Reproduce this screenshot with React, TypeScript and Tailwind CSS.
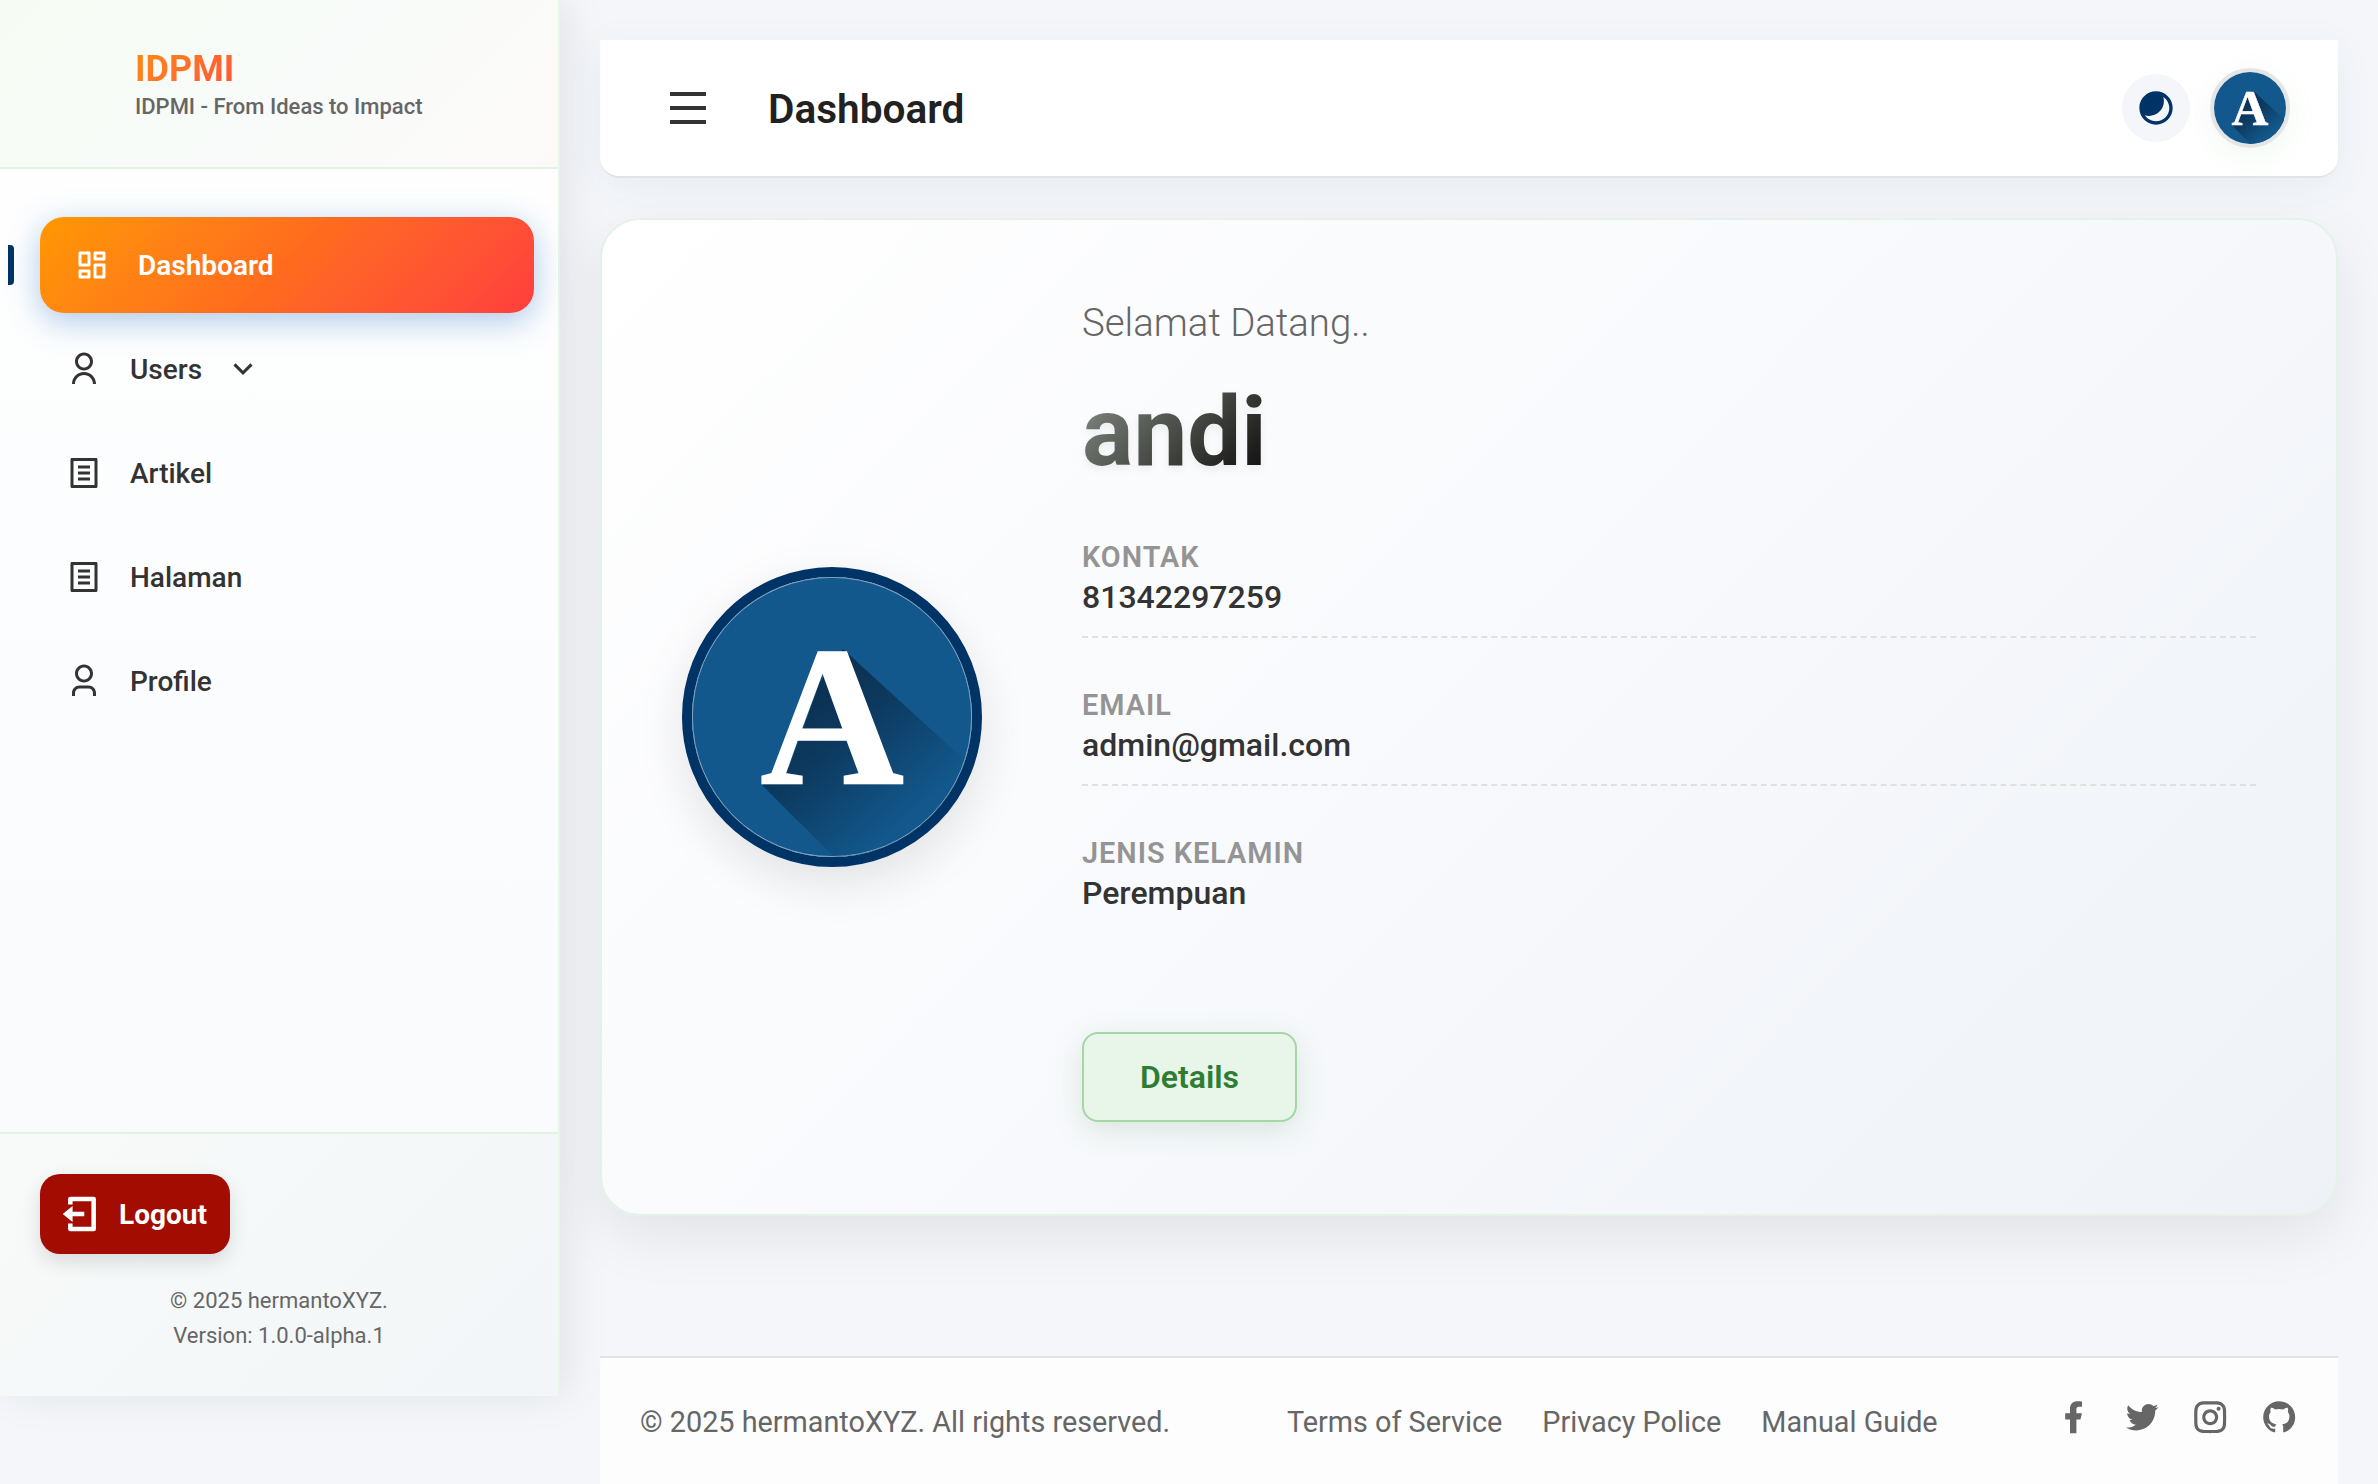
import { useId } from "react";
import type { ComponentType } from "react";
import {
  RiArrowDownSLine,
  RiContrast2Fill,
  RiDashboardLine,
  RiFacebookFill,
  RiFileListLine,
  RiGithubFill,
  RiInstagramLine,
  RiLogoutBoxLine,
  RiMenuLine,
  RiTwitterFill,
  RiUser3Line,
  RiUserLine,
} from "react-icons/ri";

type Icon = ComponentType<{ className?: string }>;

const navItems: { label: string; icon: Icon; expandable?: boolean }[] = [
  { label: "Users", icon: RiUserLine, expandable: true },
  { label: "Artikel", icon: RiFileListLine },
  { label: "Halaman", icon: RiFileListLine },
  { label: "Profile", icon: RiUser3Line },
];

const details = [
  { label: "KONTAK", value: "81342297259" },
  { label: "EMAIL", value: "admin@gmail.com" },
  { label: "JENIS KELAMIN", value: "Perempuan" },
];

const socials: Icon[] = [RiFacebookFill, RiTwitterFill, RiInstagramLine, RiGithubFill];

function AvatarArt({ rim }: { rim?: boolean }) {
  const id = useId();
  return (
    <svg viewBox="0 0 280 280" className="block h-full w-full rounded-full">
      <defs>
        <linearGradient id={id} gradientUnits="userSpaceOnUse" x1="110" y1="110" x2="222" y2="236">
          <stop offset="0" stopColor="#0b2f50" />
          <stop offset="0.4" stopColor="#0d3a60" />
          <stop offset="1" stopColor="#12588c" />
        </linearGradient>
      </defs>
      <rect width="280" height="280" fill="#12588c" />
      <path d="M151 72 L280 190 V280 H142 L70 208 L97 190 L128 105 Z" fill={`url(#${id})`} />
      <text
        x="140"
        y="207"
        textAnchor="middle"
        fill="#fff"
        stroke="#fff"
        strokeWidth="1.5"
        className="font-['Liberation_Serif',serif] text-[199px] font-bold"
      >
        A
      </text>
      {rim && <circle cx="140" cy="140" r="139.6" fill="none" stroke="#a9b9c6" strokeWidth="0.8" />}
    </svg>
  );
}

function Sidebar() {
  return (
    <aside className="relative z-10 flex h-[1396px] w-[560px] shrink-0 flex-col border-r-2 border-[#e8f5e9] bg-linear-to-b from-white to-[#f8fafc] shadow-[8px_0_40px_rgba(0,0,0,0.08)]">
      <div className="h-[169px] border-b-2 border-[#e4f2e6] bg-linear-135 from-[#f6fcf4] via-[#f8fbf9] to-[#fcfaf9] pt-12 pl-[135px]">
        <h1 className="w-[140px] bg-linear-135 from-[#ff8a0c] to-[#ff3d3d] bg-clip-text text-[36px] leading-[42px] font-bold text-transparent">
          IDPMI
        </h1>
        <p className="mt-1 text-[22px] leading-[26px] font-medium whitespace-nowrap text-[#666]">
          IDPMI - From Ideas to Impact
        </p>
      </div>

      <nav className="flex flex-1 flex-col gap-2 pt-12">
        <div className="relative ml-10 flex h-24 w-[494px] items-center gap-7 rounded-3xl bg-linear-135 from-[#ff9800] via-[#ff6b1e] to-[#ff3d3d] pl-[34px] text-white shadow-[0_8px_32px_rgba(21,101,192,0.35)]">
          <span className="absolute top-7 -left-8 h-10 w-1.5 rounded-r bg-[#003366]" />
          <RiDashboardLine className="size-9" />
          <span className="mt-0.5 text-[28px] font-semibold">Dashboard</span>
        </div>
        {navItems.map(({ label, icon: ItemIcon, expandable }) => (
          <div key={label} className="ml-8 flex h-24 w-[494px] items-center gap-7 pl-[34px] text-[#333]">
            <ItemIcon className="size-9" />
            <span className="mt-0.5 text-[28px] font-medium">{label}</span>
            {expandable && <RiArrowDownSLine className="-ml-[5px] size-9" />}
          </div>
        ))}
      </nav>

      <div className="h-[264px] border-t-2 border-[#e4f2e6] bg-linear-135 from-[#f8faf9] to-[#f2f6f8] px-10 pt-10">
        <button className="flex h-20 w-[190px] items-center gap-[17px] rounded-[20px] bg-[#a30c00] pl-[22px] text-white shadow-[0_8px_20px_rgba(0,0,0,0.12)]">
          <RiLogoutBoxLine className="size-10 stroke-current [stroke-width:0.7]" />
          <span className="mt-0.5 text-[28px] font-bold">Logout</span>
        </button>
        <div className="mt-[29px] text-center text-[22px] leading-[35px] text-[#666]">
          <p>© 2025 hermantoXYZ.</p>
          <p>Version: 1.0.0-alpha.1</p>
        </div>
      </div>
    </aside>
  );
}

function TopBar() {
  return (
    <header className="flex h-[138px] items-center rounded-b-[20px] border-b-2 border-[#e2e4e4] bg-white pr-12 pl-16 shadow-[0_8px_40px_rgba(0,90,80,0.06)]">
      <RiMenuLine className="size-12 text-[#333]" />
      <h2 className="mt-0.5 ml-14 text-[40.6px] font-semibold text-[#212121]">Dashboard</h2>
      <div className="ml-auto flex items-center gap-5">
        <div className="flex size-[68px] items-center justify-center rounded-full bg-[#f4f6fa] text-[#003366]">
          <RiContrast2Fill className="size-10" />
        </div>
        <div className="size-20 rounded-full border-4 border-[#e5e5e5] shadow-[0_8px_30px_rgba(76,175,80,0.08)]">
          <AvatarArt />
        </div>
      </div>
    </header>
  );
}

function ProfileCard() {
  return (
    <section className="mt-10 flex h-[998px] items-center gap-[100px] rounded-[40px] border-2 border-[#e4f2e8] bg-linear-135 from-white via-[#f8f9fc] to-[#eef2f7] px-20 shadow-[0_20px_60px_rgba(0,0,0,0.08)]">
      <div className="size-[300px] shrink-0 rounded-full border-[10px] border-[#003366] shadow-[0_16px_48px_rgba(0,0,0,0.1)]">
        <AvatarArt rim />
      </div>
      <div className="h-full flex-1 pt-[75px]">
        <p className="text-[38.4px] leading-[56px] font-light text-[#666]">Selamat Datang..</p>
        <h3 className="mt-[23px] w-fit bg-linear-135 from-[#8e978e] via-[#3c3e3a] via-60% to-[#080808] bg-clip-text text-[96px] leading-[116px] font-bold text-transparent drop-shadow-[0_4px_4px_rgba(0,0,0,0.06)]">
          andi
        </h3>
        <dl>
          {details.map(({ label, value }) => (
            <div
              key={label}
              className="h-[148px] border-b-2 border-dashed border-[#e0e0e0] pt-[49px] last:border-transparent"
            >
              <dt className="text-[28.8px] leading-[36px] font-semibold tracking-[1px] text-[#949494]">{label}</dt>
              <dd className="text-[32px] leading-[44px] font-medium text-[#333]">{value}</dd>
            </div>
          ))}
        </dl>
        <button className="mt-[98px] h-[90px] w-[215px] rounded-2xl border-2 border-[#a5d6a7] bg-[#e8f5e9] text-[32px] font-semibold text-[#2e7d32] shadow-[0_8px_30px_rgba(46,125,50,0.15)]">
          Details
        </button>
      </div>
    </section>
  );
}

function Footer() {
  return (
    <footer className="mt-[140px] flex h-[140px] items-start justify-between border-t-2 border-[#e2e4e4] bg-[#fdfdfd] px-10 pt-[43px] text-[28.8px] leading-[42px] text-[#666]">
      <p>© 2025 hermantoXYZ. All rights reserved.</p>
      <div className="flex gap-10">
        <a>Terms of Service</a>
        <a>Privacy Police</a>
        <a>Manual Guide</a>
      </div>
      <div className="-mt-[3px] flex gap-[30px]">
        {socials.map((SocialIcon, i) => (
          <SocialIcon key={i} className="size-[38.4px]" />
        ))}
      </div>
    </footer>
  );
}

export default function App() {
  return (
    <div className="flex h-[1484px] w-[2378px] items-start overflow-hidden bg-[#f4f6fa] font-[Roboto,sans-serif]">
      <Sidebar />
      <main className="ml-10 w-[1738px] pt-10">
        <TopBar />
        <ProfileCard />
        <Footer />
      </main>
    </div>
  );
}
